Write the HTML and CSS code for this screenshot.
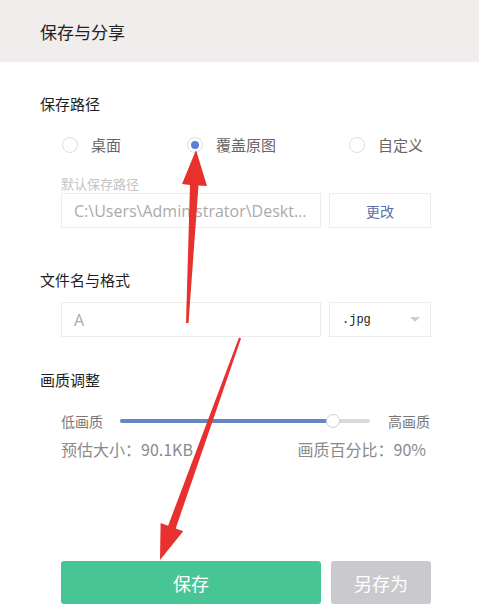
FILE: index.html
```html
<!DOCTYPE html>
<html lang="zh-CN">

<head>
    <meta charset="UTF-8">
    <meta name="viewport" content="width=device-width, initial-scale=1.0">
    <title>保存与分享</title>
    <link rel="stylesheet" href="styles.css">
</head>

<body>
    <div class="header">保存与分享</div>
    <div class="content">
        <div class="sec-title first">保存路径</div>
        <div class="radios">
            <label class="radio"><span class="dot"></span>桌面</label>
            <label class="radio"><span class="dot checked"></span>覆盖原图</label>
            <label class="radio"><span class="dot"></span>自定义</label>
        </div>
        <div class="hint">默认保存路径</div>
        <div class="row">
            <div class="box path">C:\Users\Administrator\Deskt...</div>
            <div class="box btn-change">更改</div>
        </div>

        <div class="sec-title second">文件名与格式</div>
        <div class="row name-row">
            <div class="box path">A</div>
            <div class="box select">
                <span class="ext">.jpg</span>
                <span class="caret"></span>
            </div>
        </div>

        <div class="sec-title third">画质调整</div>
        <div class="slider-row">
            <span class="lbl">低画质</span>
            <div class="track">
                <div class="fill" style="width: 85%"></div>
                <div class="handle" style="left: 85%"></div>
            </div>
            <span class="lbl">高画质</span>
        </div>
        <div class="info">
            <span>预估大小：90.1KB</span>
            <span>画质百分比：90%</span>
        </div>

        <div class="actions">
            <div class="btn save">保存</div>
            <div class="btn other">另存为</div>
        </div>
    </div>

    <!-- annotation arrows drawn over the page -->
    <svg class="arrows" width="479" height="610" viewBox="0 0 479 610">
        <polygon points="196,150 207,186 198.5,185.5 188.5,323 186,323 190,185 182,184" fill="#e8312f" />
        <polygon points="160,560 160.6,523 168.1,525.7 239,337.6 241,338.4 175.7,528.5 183.2,531.2" fill="#e8312f" />
    </svg>
</body>

</html>
```

FILE: styles.css
```css
* {
    box-sizing: border-box;
    margin: 0;
    padding: 0;
}

body {
    width: 479px;
    height: 610px;
    position: relative;
    background: #fff;
    font-family: "Noto Sans CJK SC", "Noto Sans", sans-serif;
    color: #222;
    overflow: hidden;
}

.header {
    height: 62px;
    background: #f1eded;
    display: flex;
    align-items: center;
    padding-left: 40px;
    font-size: 17px;
    color: #222;
}

.content {
    padding: 0 48px 0 40px;
}

.sec-title {
    font-size: 15px;
    line-height: 20px;
    color: #1e1e1e;
}

.sec-title.first {
    margin-top: 32px;
}

.sec-title.second {
    margin-top: 42px;
}

.sec-title.third {
    margin-top: 33px;
}

.radios {
    display: grid;
    grid-template-columns: 125px 162px auto;
    margin: 20px 0 0 22px;
    height: 20px;
}

.radio {
    display: flex;
    align-items: center;
    font-size: 15px;
    color: #666;
}

.dot {
    width: 16px;
    height: 16px;
    border: 1px solid #dedede;
    border-radius: 50%;
    margin-right: 13px;
    display: flex;
    align-items: center;
    justify-content: center;
}

.dot.checked::after {
    content: "";
    width: 8px;
    height: 8px;
    border-radius: 50%;
    background: #5b7fd8;
}

.hint {
    margin: 21px 0 0 21px;
    font-size: 13px;
    line-height: 18px;
    color: #c4c4c4;
}

.row {
    display: flex;
    gap: 8px;
    margin-left: 21px;
    height: 35px;
}

.name-row {
    margin-top: 12px;
}

.box {
    border: 1px solid #ececec;
    height: 35px;
    display: flex;
    align-items: center;
}

.path {
    width: 260px;
    padding-left: 12px;
    font-family: "Open Sans", "Noto Sans CJK SC", sans-serif;
    font-size: 16px;
    color: #aaa;
    white-space: nowrap;
    overflow: hidden;
}

.btn-change {
    width: 102px;
    justify-content: center;
    font-size: 14px;
    color: #5571ad;
}

.select {
    width: 102px;
    padding: 0 10px 0 12px;
    justify-content: space-between;
}

.ext {
    font-family: "Liberation Mono", monospace;
    font-size: 12px;
    color: #222;
}

.caret {
    width: 0;
    height: 0;
    border-left: 5px solid transparent;
    border-right: 5px solid transparent;
    border-top: 5px solid #cfcfcf;
}

.slider-row {
    display: flex;
    align-items: center;
    margin: 21px 0 0 21px;
    height: 20px;
}

.lbl {
    font-size: 14px;
    color: #777;
    width: 59px;
}

.lbl:last-child {
    width: auto;
    margin-left: 18px;
}

.track {
    position: relative;
    width: 250px;
    height: 4px;
    border-radius: 2px;
    background: #d7d7dc;
}

.fill {
    height: 4px;
    border-radius: 2px;
    background: #6685c3;
}

.handle {
    position: absolute;
    top: -5px;
    width: 14px;
    height: 14px;
    margin-left: -7px;
    border-radius: 50%;
    background: #fff;
    border: 1px solid #cfcfcf;
}

.info {
    display: flex;
    justify-content: space-between;
    margin: 8px 5px 0 21px;
    font-size: 16px;
    line-height: 20px;
    color: #8a8a8a;
}

.actions {
    display: flex;
    gap: 10px;
    margin: 102px 0 0 21px;
}

.btn {
    height: 43px;
    border-radius: 3px;
    display: flex;
    align-items: center;
    justify-content: center;
    color: #fff;
    font-size: 18px;
}

.save {
    width: 260px;
    background: #47c594;
}

.other {
    width: 100px;
    background: #c9c9ce;
}

.arrows {
    position: absolute;
    left: 0;
    top: 0;
    pointer-events: none;
}
```
